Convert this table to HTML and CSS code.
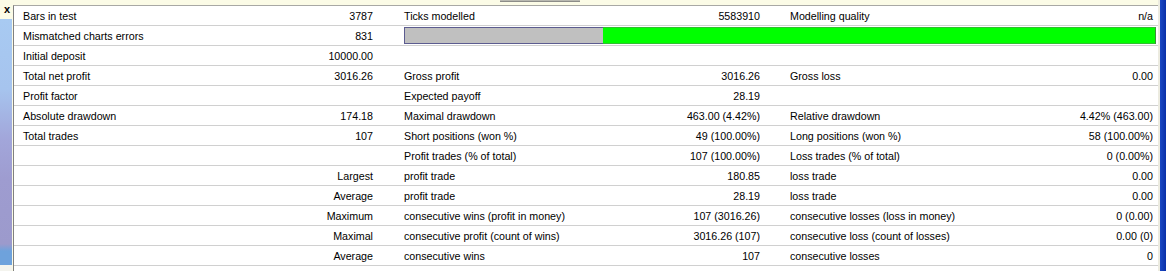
FILE: index.html
```html
<!DOCTYPE html>
<html>
<head>
<meta charset="utf-8">
<link rel="stylesheet" href="styles.css">
</head>
<body>
<div class="frame">
  <aside class="side">
    <div class="close">x</div>
    <div class="strip"></div>
    <div class="strip-foot"></div>
  </aside>
  <div class="main">
    <div class="topbar"><div class="tab"></div></div>
    <div class="table">
      <div class="row">
        <div class="cell c1"><span>Bars in test</span><span>3787</span></div>
        <div class="cell c2"><span>Ticks modelled</span><span>5583910</span></div>
        <div class="cell c3"><span>Modelling quality</span><span>n/a</span></div>
      </div>
      <div class="row">
        <div class="cell c1"><span>Mismatched charts errors</span><span>831</span></div>
        <div class="cell cbar">
          <div class="bar"><div class="bar-gray" style="width:26.4%"></div><div class="bar-green"></div></div>
        </div>
      </div>
      <div class="row">
        <div class="cell c1"><span>Initial deposit</span><span>10000.00</span></div>
        <div class="cell c2"></div>
        <div class="cell c3"></div>
      </div>
      <div class="row">
        <div class="cell c1"><span>Total net profit</span><span>3016.26</span></div>
        <div class="cell c2"><span>Gross profit</span><span>3016.26</span></div>
        <div class="cell c3"><span>Gross loss</span><span>0.00</span></div>
      </div>
      <div class="row">
        <div class="cell c1"><span>Profit factor</span><span></span></div>
        <div class="cell c2"><span>Expected payoff</span><span>28.19</span></div>
        <div class="cell c3"></div>
      </div>
      <div class="row">
        <div class="cell c1"><span>Absolute drawdown</span><span>174.18</span></div>
        <div class="cell c2"><span>Maximal drawdown</span><span>463.00 (4.42%)</span></div>
        <div class="cell c3"><span>Relative drawdown</span><span>4.42% (463.00)</span></div>
      </div>
      <div class="row">
        <div class="cell c1"><span>Total trades</span><span>107</span></div>
        <div class="cell c2"><span>Short positions (won %)</span><span>49 (100.00%)</span></div>
        <div class="cell c3"><span>Long positions (won %)</span><span>58 (100.00%)</span></div>
      </div>
      <div class="row">
        <div class="cell c1"><span></span><span></span></div>
        <div class="cell c2"><span>Profit trades (% of total)</span><span>107 (100.00%)</span></div>
        <div class="cell c3"><span>Loss trades (% of total)</span><span>0 (0.00%)</span></div>
      </div>
      <div class="row">
        <div class="cell c1"><span></span><span>Largest</span></div>
        <div class="cell c2"><span>profit trade</span><span>180.85</span></div>
        <div class="cell c3"><span>loss trade</span><span>0.00</span></div>
      </div>
      <div class="row">
        <div class="cell c1"><span></span><span>Average</span></div>
        <div class="cell c2"><span>profit trade</span><span>28.19</span></div>
        <div class="cell c3"><span>loss trade</span><span>0.00</span></div>
      </div>
      <div class="row">
        <div class="cell c1"><span></span><span>Maximum</span></div>
        <div class="cell c2"><span>consecutive wins (profit in money)</span><span>107 (3016.26)</span></div>
        <div class="cell c3"><span>consecutive losses (loss in money)</span><span>0 (0.00)</span></div>
      </div>
      <div class="row">
        <div class="cell c1"><span></span><span>Maximal</span></div>
        <div class="cell c2"><span>consecutive profit (count of wins)</span><span>3016.26 (107)</span></div>
        <div class="cell c3"><span>consecutive loss (count of losses)</span><span>0.00 (0)</span></div>
      </div>
      <div class="row">
        <div class="cell c1"><span></span><span>Average</span></div>
        <div class="cell c2"><span>consecutive wins</span><span>107</span></div>
        <div class="cell c3"><span>consecutive losses</span><span>0</span></div>
      </div>
    </div>
  </div>
  <div class="edge"><div class="edge-light"></div><div class="edge-blue"></div></div>
</div>
</body>
</html>
```

FILE: styles.css
```css
html, body {
  margin: 0;
  padding: 0;
  background: #ffffff;
}
body {
  font-family: "Liberation Sans", Arial, sans-serif;
  font-size: 10.7px;
  color: #000000;
  width: 1166px;
  height: 271px;
  overflow: hidden;
}
.frame {
  display: flex;
  height: 271px;
  background: #ffffff;
}
.side {
  width: 13px;
  display: flex;
  flex-direction: column;
  background: #fbfbe6;
}
.close {
  height: 19px;
  font-size: 11px;
  font-weight: bold;
  line-height: 19px;
  padding-left: 4px;
  box-sizing: border-box;
  background: #fbfbe6;
}
.strip {
  flex: 0 0 246px;
  width: 12px;
  background: linear-gradient(to bottom, #a8caf2 0px, #a6c4ee 70px, #a2a6da 120px, #9e9cd0 160px, #9c9acc 225px, #6ea2dc 232px, #6ea2dc 246px);
}
.strip-foot {
  flex: 1;
  width: 12px;
  background: #f4f4ee;
}
.main {
  flex: 0 0 1145px;
  display: flex;
  flex-direction: column;
}
.topbar {
  height: 5px;
  background: #fbfbe6;
  position: relative;
}
.tab {
  position: absolute;
  left: 487px;
  top: 0;
  width: 80px;
  height: 1px;
  background: #b8b8b0;
  border-bottom: 1px solid #8c8c88;
}
.table {
  border-top: 1px solid #a8a8a4;
  border-left: 1px solid #808080;
  flex: 1;
  background: #ffffff;
}
.row {
  display: grid;
  grid-template-columns: 384px 386px 1fr;
  height: 19px;
  border-bottom: 1px solid #d0d0d0;
}
.cell {
  display: flex;
  justify-content: space-between;
  align-items: flex-start;
  white-space: nowrap;
  line-height: 17px;
  padding-top: 2px;
  box-sizing: border-box;
  height: 19px;
}
.c1 {
  padding-left: 9px;
  padding-right: 25px;
}
.c2 {
  padding-left: 6px;
  padding-right: 24px;
}
.c3 {
  padding-left: 6px;
  padding-right: 5px;
}
.cbar {
  grid-column: 2 / 4;
  padding: 1px 2px 0 6px;
}
.bar {
  flex: 1;
  display: flex;
  height: 17px;
}
.bar-gray {
  box-sizing: border-box;
  background: #c0c0c0;
  border: 1px solid #5c5c90;
  border-right: none;
}
.bar-green {
  flex: 1;
  box-sizing: border-box;
  background: #00ff00;
  border: 1px solid #2fbf2f;
  border-left: none;
  border-right-color: #3a8f3a;
}
.edge {
  flex: 1;
  display: flex;
}
.edge-light {
  width: 2px;
  background: #ecebe0;
}
.edge-blue {
  flex: 1;
  background: linear-gradient(to right, #1a48c4, #0a30a8);
}
```
